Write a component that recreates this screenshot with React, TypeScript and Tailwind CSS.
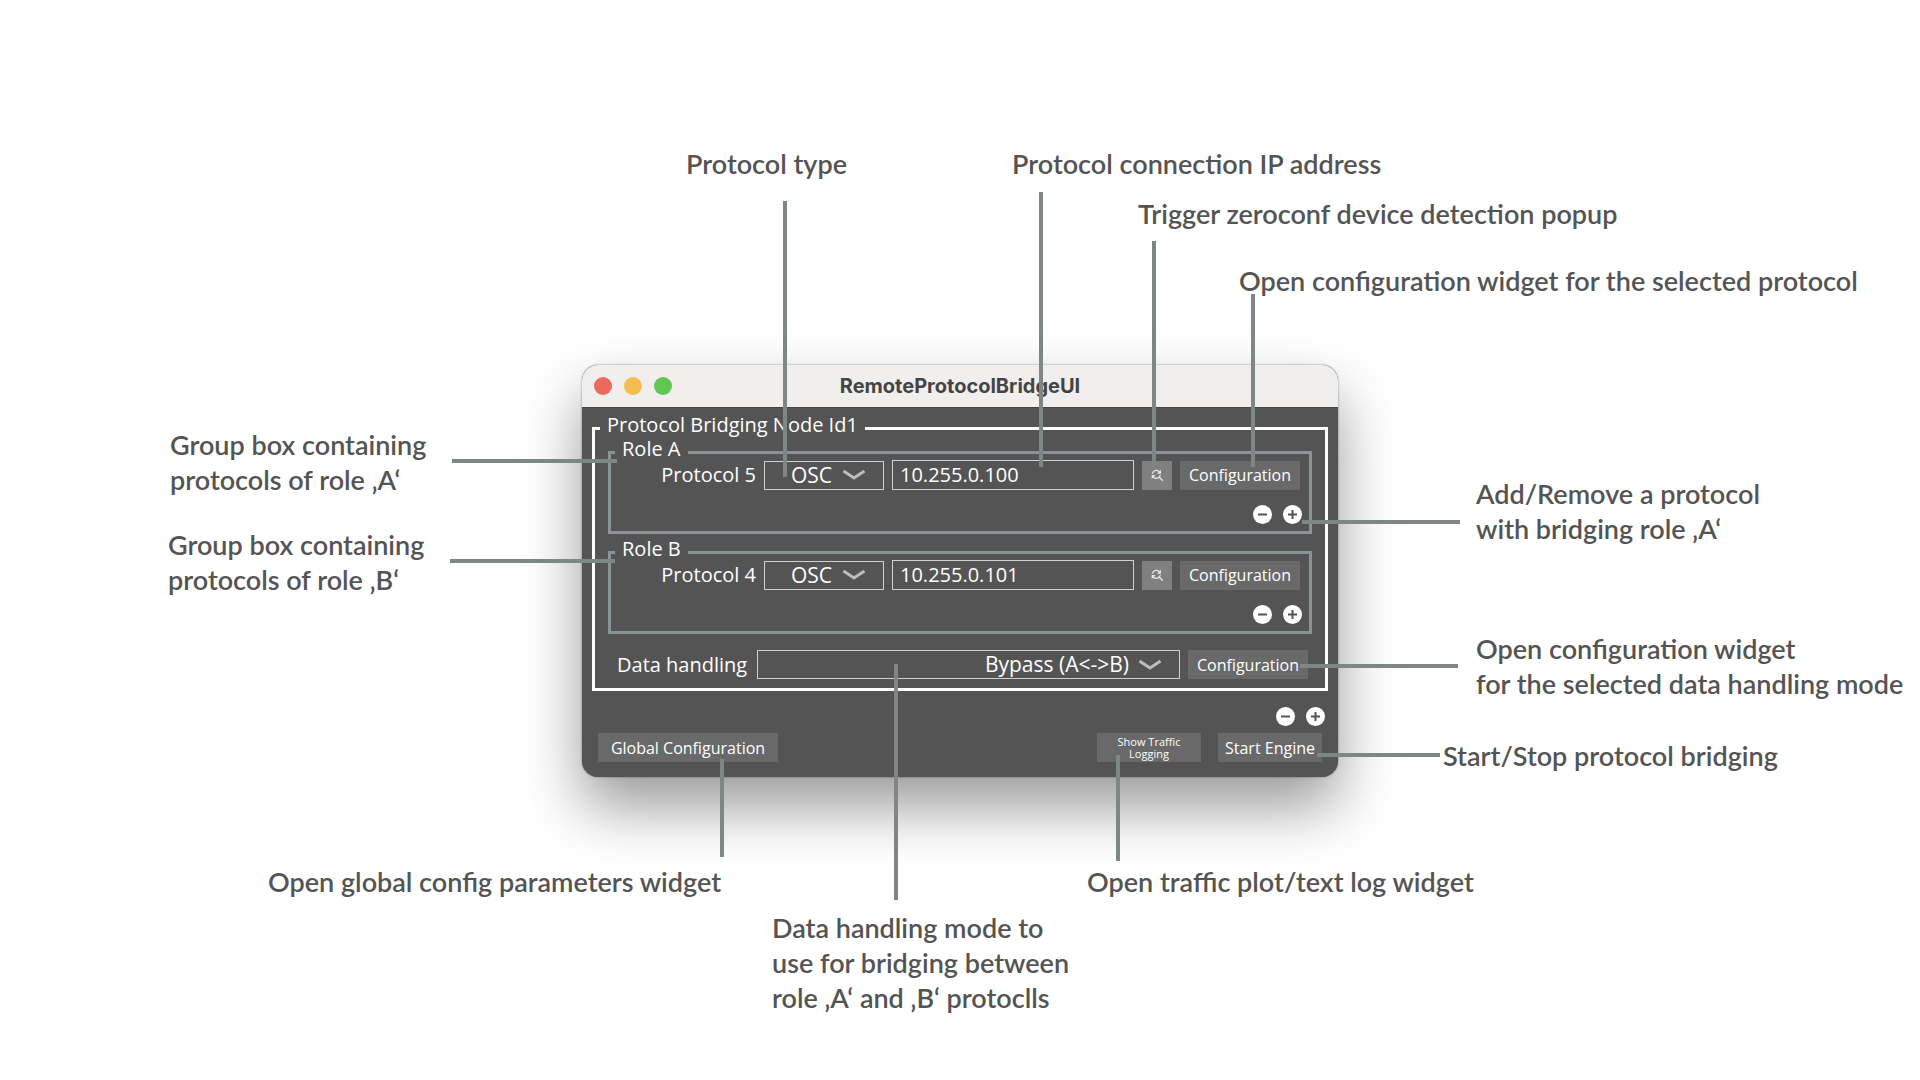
import type { ReactNode } from "react";
import { MdFindReplace } from "react-icons/md";

const options = ["OSC", "MIDI", "OCP1"];

function Chevron() {
  return (
    <svg
      className="pointer-events-none absolute top-1/2 right-[18px] h-[11px] w-[24px] -translate-y-1/2"
      viewBox="0 0 24 11"
      fill="none"
      stroke="#bcbcbc"
      strokeWidth="3"
      aria-hidden="true"
    >
      <path d="M1.5 1.5 L12 8.5 L22.5 1.5" />
    </svg>
  );
}

function FlatButton({ className, children }: { className: string; children: ReactNode }) {
  return (
    <button type="button" className={`h-[29px] shrink-0 bg-[#696969] text-white ${className}`}>
      {children}
    </button>
  );
}

function RoundButton({ kind, label }: { kind: "minus" | "plus"; label: string }) {
  return (
    <button type="button" aria-label={label} className="size-[19px] rounded-full bg-white">
      <svg viewBox="0 0 19 19" className="size-full" stroke="#545454" strokeWidth="2" aria-hidden="true">
        <path d={kind === "minus" ? "M5 9.5H14" : "M5 9.5H14M9.5 5V14"} />
      </svg>
    </button>
  );
}

function AddRemove({ target, className }: { target: string; className: string }) {
  return (
    <div className={`mr-[3px] flex justify-end gap-[11px] ${className}`}>
      <RoundButton kind="minus" label={`Remove ${target}`} />
      <RoundButton kind="plus" label={`Add ${target}`} />
    </div>
  );
}

function RoleGroup({ role, protocol, ip, className }: { role: string; protocol: string; ip: string; className: string }) {
  const id = `protocol-${role}`;
  return (
    <fieldset className={`mx-2 min-w-0 border-3 border-[#8a9496] px-1 pb-[7px] ${className}`}>
      <legend className="px-[7px] pb-[6px] leading-4">Role {role}</legend>
      <div className="-mt-[3px] mr-[5px] flex h-[30px] items-center gap-2">
        <label htmlFor={id} className="w-[141px] shrink-0 text-right">
          {protocol}
        </label>
        <div className="relative w-[120px] shrink-0">
          <select
            id={id}
            defaultValue="OSC"
            className="block h-[29px] w-full appearance-none border border-[#d0d0d0] bg-transparent pl-[26px] text-[21px] leading-[27px]"
          >
            {options.map((o) => (
              <option key={o}>{o}</option>
            ))}
          </select>
          <Chevron />
        </div>
        <input
          type="text"
          aria-label={`${protocol} IP address`}
          defaultValue={ip}
          className="h-[30px] min-w-0 flex-1 border border-[#d0d0d0] bg-transparent px-[7px]"
        />
        <button
          type="button"
          aria-label="Detect devices"
          className="flex h-[29px] w-[30px] shrink-0 items-center justify-center bg-[#808080]"
        >
          <MdFindReplace className="size-4 text-[#e4e4e4]" />
        </button>
        <FlatButton className="w-[120px] text-[16px]">Configuration</FlatButton>
      </div>
      <AddRemove target={`protocol in role ${role}`} className="mt-[15px]" />
    </fieldset>
  );
}

function BridgeWindow() {
  return (
    <section className="overflow-hidden rounded-[16px] bg-[#545454] font-['Open_Sans','Noto_Sans',sans-serif] text-[20px] font-medium text-white shadow-[0_30px_60px_rgba(0,0,0,0.4),0_0_2px_rgba(0,0,0,0.5)]">
      <header className="relative flex h-[43px] items-center gap-3 border-b border-[#444] bg-[#f0efee] pl-3">
        <span className="size-[18px] rounded-full bg-[#ec695e]" />
        <span className="size-[18px] rounded-full bg-[#f4be4f]" />
        <span className="size-[18px] rounded-full bg-[#61c654]" />
        <h1 className="absolute inset-x-0 text-center font-['Inter',sans-serif] text-[20px] font-bold text-[#444]">
          RemoteProtocolBridgeUI
        </h1>
      </header>
      <div className="px-[10px] pt-2 pb-[15px]">
        <fieldset className="min-w-0 border-3 border-white px-[5px] pb-[9px]">
          <legend className="px-[7px] pb-[7px] leading-[18px]">Protocol Bridging Node Id1</legend>
          <RoleGroup role="A" protocol="Protocol 5" ip="10.255.0.100" className="" />
          <RoleGroup role="B" protocol="Protocol 4" ip="10.255.0.101" className="mt-[7px]" />
          <div className="mt-4 mr-3 ml-[17px] flex h-[29px] items-center gap-2">
            <label htmlFor="data-handling" className="w-[132px] shrink-0 whitespace-nowrap">
              Data handling
            </label>
            <div className="relative min-w-0 flex-1">
              <select
                id="data-handling"
                defaultValue="Bypass (A<->B)"
                className="block h-[29px] w-full appearance-none border border-[#d0d0d0] bg-transparent pr-[50px] text-[21px] leading-[27px] [text-align-last:right]"
              >
                <option>{"Bypass (A<->B)"}</option>
              </select>
              <Chevron />
            </div>
            <FlatButton className="w-[120px] text-[16px]">Configuration</FlatButton>
          </div>
        </fieldset>
        <AddRemove target="node" className="mt-4" />
        <div className="mx-[6px] mt-[7px] flex">
          <FlatButton className="w-[180px] text-[16px]">Global Configuration</FlatButton>
          <FlatButton className="mr-[17px] ml-auto w-[104px] px-4 text-[11px] leading-3">Show Traffic Logging</FlatButton>
          <FlatButton className="w-[104px] text-[16px]">Start Engine</FlatButton>
        </div>
      </div>
    </section>
  );
}

/* Positions are relative to the window's top-left corner. */
const leaders = [
  "left-[201px] -top-[164px] h-[276px] w-1",
  "left-[457px] -top-[173px] h-[275px] w-1",
  "left-[570px] -top-[124px] h-[226px] w-1",
  "left-[669px] -top-[71px] h-[173px] w-1",
  "-left-[130px] top-[94px] h-1 w-[165px]",
  "-left-[132px] top-[194px] h-1 w-[165px]",
  "left-[720px] top-[155px] h-1 w-[158px]",
  "left-[718px] top-[299px] h-1 w-[158px]",
  "left-[735px] top-[388px] h-1 w-[123px]",
  "left-[138px] top-[394px] h-[98px] w-1",
  "left-[312px] top-[299px] h-[236px] w-1",
  "left-[534px] top-[390px] h-[106px] w-1",
];

const notes = [
  { at: "left-[104px] -top-[219px]", lines: ["Protocol type"] },
  { at: "left-[430px] -top-[219px]", lines: ["Protocol connection IP address"] },
  { at: "left-[556px] -top-[169px]", lines: ["Trigger zeroconf device detection popup"] },
  { at: "left-[657px] -top-[102px]", lines: ["Open configuration widget for the selected protocol"] },
  { at: "-left-[412px] top-[62px]", lines: ["Group box containing", "protocols of role ‚A‘"] },
  { at: "-left-[414px] top-[162px]", lines: ["Group box containing", "protocols of role ‚B‘"] },
  { at: "left-[894px] top-[111px]", lines: ["Add/Remove a protocol", "with bridging role ‚A‘"] },
  { at: "left-[894px] top-[266px]", lines: ["Open configuration widget", "for the selected data handling mode"] },
  { at: "left-[861px] top-[373px]", lines: ["Start/Stop protocol bridging"] },
  { at: "-left-[314px] top-[499px]", lines: ["Open global config parameters widget"] },
  { at: "left-[505px] top-[499px]", lines: ["Open traffic plot/text log widget"] },
  { at: "left-[190px] top-[545px]", lines: ["Data handling mode to", "use for bridging between", "role ‚A‘ and ‚B‘ protoclls"] },
];

export default function App() {
  return (
    <main className="flex min-h-screen items-start justify-center overflow-hidden bg-white">
      <div className="relative mt-[365px] w-[756px] shrink-0">
        <BridgeWindow />
        {leaders.map((at) => (
          <span key={at} className={`pointer-events-none absolute bg-[#7f8785] ${at}`} />
        ))}
        {notes.map((note) => (
          <p
            key={note.at}
            className={`absolute font-['Lato',sans-serif] text-[27px] leading-[35px] font-semibold whitespace-nowrap text-[#545454] ${note.at}`}
          >
            {note.lines.map((line) => (
              <span key={line} className="block">
                {line}
              </span>
            ))}
          </p>
        ))}
      </div>
    </main>
  );
}
